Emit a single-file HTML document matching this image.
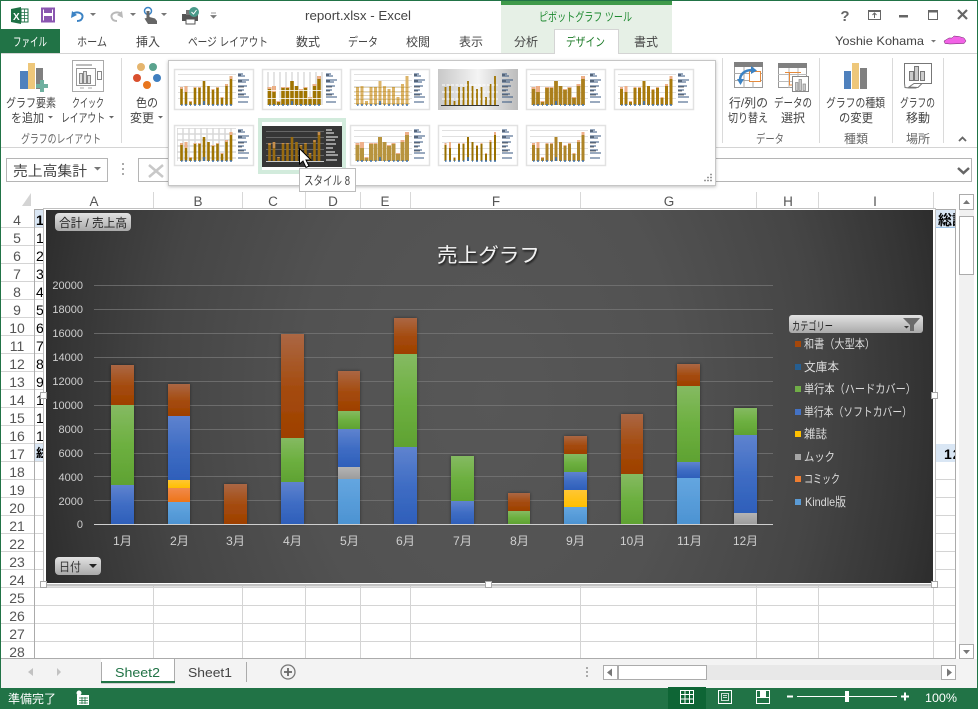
<!DOCTYPE html>
<html lang="ja"><head><meta charset="utf-8"><title>report.xlsx - Excel</title>
<style>
html,body{margin:0;padding:0;background:#fff;width:978px;height:709px;overflow:hidden}
svg{display:block}
text{font-family:"Liberation Sans","Noto Sans CJK JP",sans-serif;font-size:12px;fill:#444}
.r{font-size:14px;fill:#555;text-anchor:middle}
.c{font-size:13.5px;fill:#555;text-anchor:middle}
.y{font-size:11px;fill:#cfcfcf;text-anchor:end}
.m{font-size:12px;fill:#cfcfcf}
.l{font-size:12px;fill:#dcdcdc}
.g{fill:#666}
.k{font-size:14px;fill:#000}
</style></head><body>
<svg width="978" height="709" viewBox="0 0 978 709" xmlns="http://www.w3.org/2000/svg">
<defs>
<linearGradient id="br" x1="0" y1="0" x2="0" y2="1"><stop offset="0" stop-color="#ab6744"/><stop offset=".55" stop-color="#a44a0c"/><stop offset="1" stop-color="#9e4000"/></linearGradient>
<linearGradient id="gr" x1="0" y1="0" x2="0" y2="1"><stop offset="0" stop-color="#85ba62"/><stop offset=".5" stop-color="#6db040"/><stop offset="1" stop-color="#5fa232"/></linearGradient>
<linearGradient id="bl" x1="0" y1="0" x2="0" y2="1"><stop offset="0" stop-color="#5f83cf"/><stop offset=".5" stop-color="#3f6dc4"/><stop offset="1" stop-color="#2e5fba"/></linearGradient>
<linearGradient id="kd" x1="0" y1="0" x2="0" y2="1"><stop offset="0" stop-color="#64a6e0"/><stop offset="1" stop-color="#4c93d2"/></linearGradient>
<linearGradient id="gy" x1="0" y1="0" x2="0" y2="1"><stop offset="0" stop-color="#b4b4b4"/><stop offset="1" stop-color="#9c9c9c"/></linearGradient>
<linearGradient id="or" x1="0" y1="0" x2="0" y2="1"><stop offset="0" stop-color="#f08a4c"/><stop offset="1" stop-color="#ee7518"/></linearGradient>
<linearGradient id="ye" x1="0" y1="0" x2="0" y2="1"><stop offset="0" stop-color="#ffc634"/><stop offset="1" stop-color="#ffbf00"/></linearGradient>
<linearGradient id="btn" x1="0" y1="0" x2="0" y2="1"><stop offset="0" stop-color="#e2e2e2"/><stop offset="1" stop-color="#a9a9a9"/></linearGradient>
<linearGradient id="tg" x1="0" y1="0" x2="1" y2="0"><stop offset="0" stop-color="#c8c8c8"/><stop offset=".5" stop-color="#f4f4f4"/><stop offset="1" stop-color="#bcbcbc"/></linearGradient>
<radialGradient id="cb" gradientUnits="userSpaceOnUse" cx="490" cy="400" r="470" gradientTransform="translate(490 400) scale(1 1.4) translate(-490 -400)"><stop offset="0" stop-color="#575757"/><stop offset=".4" stop-color="#525252"/><stop offset=".7" stop-color="#454545"/><stop offset=".9" stop-color="#353535"/><stop offset="1" stop-color="#2b2b2b"/></radialGradient>
<filter id="sh" x="-30%" y="-10%" width="160%" height="120%"><feDropShadow dx="0" dy="0" stdDeviation="1.6" flood-color="#000" flood-opacity=".45"/></filter>
<filter id="ts" x="-10%" y="-20%" width="120%" height="150%"><feDropShadow dx="1" dy="1.5" stdDeviation="1" flood-color="#000" flood-opacity=".8"/></filter>
<filter id="pop" x="-3%" y="-5%" width="106%" height="112%"><feDropShadow dx="0" dy="1" stdDeviation="1.5" flood-color="#000" flood-opacity=".25"/></filter>
<clipPath id="ca"><rect x="35" y="210" width="8" height="248"/></clipPath>
<clipPath id="cz"><rect x="936" y="210" width="19" height="260"/></clipPath>
<pattern id="pt" width="6" height="6" patternUnits="userSpaceOnUse"><rect width="6" height="6" fill="#fff"/><path d="M0 3H6M3 0V6" stroke="#d8d8d8" stroke-width="1.5"/></pattern>
<g id="f"><rect x=".5" y=".5" width="79" height="40" fill="#fff" stroke="#e2e2e2" stroke-width="1.5"/></g>
<path id="gh" d="M4 5.500H62M4 11.500H62M4 17.500H62M4 23.500H62M4 29.500H62" stroke="#e0e0e0" fill="none"/>
<path id="b" fill="none" d="M7.500 36V18M12 36V17M16.500 36V32M21 36V18M25.500 36V18M30 36V12M34.500 36V17M39 36V20M43.500 36V18M48 36V28M52.500 36V15M57 36V7"/>
<path id="tc" fill="none" d="M7.500 18V20M12 17V23M16.500 32V33M21 18V19M25.500 18V19M39 20V21M43.500 18V19M48 28V29M52.500 15V17M57 7V10" stroke="#efb08a"/>
<path id="bb" fill="none" d="M7 36H8.500M11 36H13M16 36H17M20 36H22M25 36H26.500M29 35H31M34 36H35M38 36H40M43 36H44.500M47 36H49M52 36H53.500M56 36H58M30 32V36" stroke="#3b72b4" stroke-width="1.500"/>
<g id="lg" fill="none" stroke-width="1">
<path d="M64 5H69M64 7H71M64 11H75M64 13H72M64 17H73M64 21H70M64 25H72M64 28H75M64 33H74" stroke="#34557f"/>
<path d="M64 6H67M64 12H68M64 18H70M64 22H68M64 26H70" stroke="#777"/>
</g>
</defs>

<rect width="978" height="709" fill="#fff"/>

<!-- Contextual tab background -->
<rect x="501" y="0" width="171" height="53" fill="#e6f0e6"/>
<rect x="501" y="1" width="171" height="4" fill="#3f9a4a"/>
<text x="539" y="21" textLength="93" lengthAdjust="spacingAndGlyphs" style="fill:#1e8a30">ピボットグラフ ツール</text>

<!-- Title bar -->
<text x="305" y="20" textLength="106" lengthAdjust="spacingAndGlyphs" style="font-size:13px">report.xlsx - Excel</text>

<!-- QAT -->
<path d="M11 9L21 7V24L11 22Z" fill="#1e7145"/><rect x="21" y="9" width="7" height="13" fill="#fff" stroke="#1e7145"/><path d="M21 12.500H28M21 15.500H28M21 18.500H28M24.500 9V22" stroke="#1e7145" stroke-width=".8"/>
<text x="13" y="20" style="font-size:10px;font-weight:bold;fill:#fff">X</text>
<rect x="42" y="8.500" width="12" height="13" fill="#fff" stroke="#8a56b0" stroke-width="2"/><rect x="44" y="8" width="8" height="5" fill="#8a56b0"/><rect x="44" y="16" width="8" height="5" fill="#8a56b0"/>
<path d="M72 11 L71 18 L77 15Z" fill="#3c83c4"/><path d="M73 13.500C77 11 83 13 82.500 17C82 20 80 21 77 21" fill="none" stroke="#3c83c4" stroke-width="2"/>
<path d="M122 11L123 18L117 15Z" fill="#b9b9b9"/><path d="M121 13.500C117 11 111 13 111.500 17C112 20 114 21 117 21" fill="none" stroke="#b9b9b9" stroke-width="2"/>
<path d="M90 13H96L93 16Z M130 13H136L133 16Z M161 13H167L164 16Z" fill="#777"/>
<circle cx="148" cy="11" r="3.500" fill="none" stroke="#3c83c4" stroke-width="1.500"/>
<path d="M146.500 11H149.500V17L155 18.500L157 21V24H148L144.500 18.500L146.500 18Z" fill="#666"/>
<rect x="182" y="14" width="16" height="7" fill="#555"/><rect x="186" y="10" width="8" height="5" fill="#777"/><rect x="186" y="19" width="9" height="5" fill="#fff" stroke="#555"/>
<circle cx="194" cy="12" r="5" fill="#4a9a8a"/><path d="M191.500 12L193.500 14L196.500 10" fill="none" stroke="#fff"/>
<path d="M211 13H216M211 15.500H216L213.500 18Z" stroke="#777" fill="#777" stroke-width=".8"/>

<!-- Window controls -->
<text x="845" y="21" text-anchor="middle" style="font-size:15px;font-weight:bold;fill:#666">?</text>
<rect x="868.500" y="10.500" width="12" height="9" fill="none" stroke="#666" stroke-width="1"/><rect x="868" y="10" width="13" height="2" fill="#666"/><path d="M874.500 18V13M872.500 15L874.500 13L876.500 15" fill="none" stroke="#666"/>
<rect x="899" y="15" width="9" height="2.500" fill="#666"/>
<rect x="928.500" y="10.500" width="9" height="9" fill="none" stroke="#666"/><rect x="928" y="10" width="10" height="2.500" fill="#666"/>
<path d="M958 10L967 19M967 10L958 19" stroke="#666" stroke-width="2.200"/>

<!-- Tabs -->
<rect x="1" y="29" width="59" height="25" fill="#217346"/>
<text x="13" y="46" textLength="34" lengthAdjust="spacingAndGlyphs" style="fill:#fff">ファイル</text>
<text x="77" y="46" textLength="30" lengthAdjust="spacingAndGlyphs">ホーム</text>
<text x="136" y="46" textLength="24" lengthAdjust="spacingAndGlyphs">挿入</text>
<text x="188" y="46" textLength="80" lengthAdjust="spacingAndGlyphs">ページ レイアウト</text>
<text x="296" y="46" textLength="24" lengthAdjust="spacingAndGlyphs">数式</text>
<text x="348" y="46" textLength="30" lengthAdjust="spacingAndGlyphs">データ</text>
<text x="406" y="46" textLength="24" lengthAdjust="spacingAndGlyphs">校閲</text>
<text x="459" y="46" textLength="24" lengthAdjust="spacingAndGlyphs">表示</text>
<text x="514" y="46" textLength="24" lengthAdjust="spacingAndGlyphs">分析</text>
<text x="634" y="46" textLength="24" lengthAdjust="spacingAndGlyphs">書式</text>
<rect x="0" y="53" width="978" height="1" fill="#d4d4d4"/>
<path d="M554.500 54V29.500H618.500V54" fill="#fff" stroke="#d4d4d4"/><rect x="555" y="52" width="63" height="3" fill="#fff"/>
<text x="566" y="46" textLength="39" lengthAdjust="spacingAndGlyphs" style="fill:#1b7a26">デザイン</text>
<text x="835" y="45" textLength="89" lengthAdjust="spacingAndGlyphs">Yoshie Kohama</text>
<path d="M931 40H936L933.500 42.500Z" fill="#777"/>
<path d="M944 41L949 38L952 38L954 36L959 36.500L964 38L966 41L964 43.500L950 44L945 43.500Z" fill="#f262e6" stroke="#6a2a68" stroke-width=".5"/>

<!-- Ribbon left -->
<rect x="20" y="71" width="8" height="18" fill="#4f81bd"/><rect x="28" y="63" width="7" height="26" fill="#eec77a"/><rect x="36" y="68" width="7" height="21" fill="#808080"/>
<path d="M42 80V92M36 86H48" stroke="#6fb0a0" stroke-width="4"/>
<text x="6" y="107" textLength="50" lengthAdjust="spacingAndGlyphs">グラフ要素</text>
<text x="11" y="122" textLength="33" lengthAdjust="spacingAndGlyphs">を追加</text>
<path d="M48 116H53L50.500 118.500Z" fill="#666"/>
<rect x="72.500" y="60.500" width="31" height="31" fill="#fff" stroke="#aaa"/>
<rect x="76" y="64" width="16" height="2" fill="#bbb"/>
<rect x="76.500" y="68.500" width="19" height="17" fill="#fff" stroke="#999"/>
<rect x="79.500" y="73.500" width="3" height="10" fill="#ddd" stroke="#888"/><rect x="83.500" y="71.500" width="3" height="12" fill="#ddd" stroke="#888"/><rect x="87.500" y="75.500" width="3" height="8" fill="#ddd" stroke="#888"/>
<rect x="97.500" y="71.500" width="4" height="8" fill="#fff" stroke="#888"/>
<path d="M80 88H84M88 88H92" stroke="#aaa"/>
<text x="72" y="107" textLength="32" lengthAdjust="spacingAndGlyphs">クイック</text>
<text x="61" y="122" textLength="44" lengthAdjust="spacingAndGlyphs">レイアウト</text>
<path d="M109 116H114L111.500 118.500Z" fill="#666"/>
<text x="21" y="143" textLength="80" lengthAdjust="spacingAndGlyphs" class="g">グラフのレイアウト</text>
<rect x="121" y="58" width="1" height="85" fill="#dadada"/>
<circle cx="141" cy="67" r="4" fill="#e5b56e"/><circle cx="153" cy="67" r="4" fill="#5aa38e"/><circle cx="137" cy="78" r="4" fill="#d9502e"/><circle cx="157" cy="78" r="4" fill="#3f7fbf"/><circle cx="147" cy="85" r="4" fill="#e8761e"/>
<text x="136" y="107" textLength="22" lengthAdjust="spacingAndGlyphs">色の</text>
<text x="130" y="122" textLength="24" lengthAdjust="spacingAndGlyphs">変更</text>
<path d="M158 116H163L160.500 118.500Z" fill="#666"/>

<!-- Ribbon right -->
<rect x="722" y="58" width="1" height="85" fill="#dadada"/><rect x="819" y="58" width="1" height="85" fill="#dadada"/><rect x="892" y="58" width="1" height="85" fill="#dadada"/><rect x="943" y="58" width="1" height="85" fill="#dadada"/>
<rect x="734.500" y="62.500" width="28" height="25" fill="#fff" stroke="#999"/><rect x="734" y="62" width="29" height="5" fill="#808080"/>
<path d="M734 73.500H763M734 80.500H763M744 67V88M753 67V88" stroke="#aaa"/>
<rect x="749.500" y="71.500" width="11" height="10" fill="#fff" stroke="#e58a3c"/>
<path d="M740 80C740 74 745 70 752 70" fill="none" stroke="#3c83c4" stroke-width="2.500"/><path d="M751 66L757 70.500L751 74Z" fill="#3c83c4"/><path d="M737 79L744 79L740.500 85Z" fill="#3c83c4"/>
<rect x="778.500" y="63.500" width="28" height="24" fill="#fff" stroke="#999"/><rect x="778" y="63" width="29" height="5" fill="#808080"/>
<path d="M778 74.500H807M778 81.500H807M789 68V88M798 68V88" stroke="#bbb"/><path d="M785 72.500H801M789.500 72V85H792" stroke="#e58a3c" fill="none"/>
<rect x="792.500" y="76.500" width="16" height="15" fill="#fff" stroke="#888"/><rect x="795.500" y="82.500" width="2.500" height="8" fill="#ccc" stroke="#888" stroke-width=".7"/><rect x="799" y="79.500" width="2.500" height="11" fill="#ccc" stroke="#888" stroke-width=".7"/><rect x="803" y="84" width="2.500" height="6.500" fill="#ccc" stroke="#888" stroke-width=".7"/>
<text x="729" y="107" textLength="39" lengthAdjust="spacingAndGlyphs">行/列の</text>
<text x="728" y="122" textLength="40" lengthAdjust="spacingAndGlyphs">切り替え</text>
<text x="774" y="107" textLength="38" lengthAdjust="spacingAndGlyphs">データの</text>
<text x="781" y="122" textLength="24" lengthAdjust="spacingAndGlyphs">選択</text>
<text x="756" y="143" textLength="28" lengthAdjust="spacingAndGlyphs" class="g">データ</text>
<rect x="844" y="71" width="7" height="18" fill="#4f81bd"/><rect x="852" y="63" width="7" height="26" fill="#eec77a"/><rect x="860" y="68" width="7" height="21" fill="#808080"/>
<text x="826" y="107" textLength="59" lengthAdjust="spacingAndGlyphs">グラフの種類</text>
<text x="839" y="122" textLength="34" lengthAdjust="spacingAndGlyphs">の変更</text>
<text x="844" y="143" textLength="24" lengthAdjust="spacingAndGlyphs" class="g">種類</text>
<path d="M904.500 63.500H931.500V83.500H920L916 88H909L905 87.500L904.500 83.500Z" fill="#fff" stroke="#777"/>
<path d="M909 87L914 83.500H922L918 87.500Z" fill="#fff" stroke="#777"/>
<rect x="909.500" y="71.500" width="4" height="9" fill="#ccc" stroke="#777"/><rect x="914.500" y="66.500" width="4" height="14" fill="#ccc" stroke="#777"/><rect x="920.500" y="71.500" width="4" height="9" fill="#ccc" stroke="#777"/>
<text x="900" y="107" textLength="35" lengthAdjust="spacingAndGlyphs">グラフの</text>
<text x="906" y="122" textLength="24" lengthAdjust="spacingAndGlyphs">移動</text>
<text x="906" y="143" textLength="24" lengthAdjust="spacingAndGlyphs" class="g">場所</text>
<path d="M959 141L962.500 137.500L966 141" fill="none" stroke="#666" stroke-width="1.800"/>
<rect x="0" y="147" width="978" height="1" fill="#d4d4d4"/>

<!-- Formula bar -->
<rect x="6.500" y="158.500" width="101" height="23" fill="#fff" stroke="#b5b5b5"/>
<text x="13" y="176" textLength="74" lengthAdjust="spacingAndGlyphs" style="font-size:14px">売上高集計</text>
<path d="M94 167H101L97.500 170.500Z" fill="#777"/>
<path d="M123 163V165M123 168V170M123 173V175" stroke="#aaa" stroke-width="2"/>
<rect x="138.500" y="158.500" width="833" height="23" fill="#fff" stroke="#b5b5b5"/>
<path d="M149 165L163 177M163 165L149 177" stroke="#c8c8c8" stroke-width="2.500"/>
<path d="M958 168L963.500 173L969 168" fill="none" stroke="#666" stroke-width="2.500"/>

<!-- Column headers -->
<rect x="1" y="192" width="955" height="17" fill="#fff"/>
<path d="M31 193V206H22Z" fill="#d4d4d4"/>
<path d="M153.500 192V209M242.500 192V209M305.500 192V209M360.500 192V209M410.500 192V209M580.500 192V209M756.500 192V209M818.500 192V209M933.500 192V209" stroke="#d8d8d8"/>
<rect x="34" y="209" width="922" height="1" fill="#ababab"/>
<text class="c" x="94" y="206">A</text><text class="c" x="198" y="206">B</text><text class="c" x="273" y="206">C</text><text class="c" x="333" y="206">D</text><text class="c" x="385" y="206">E</text><text class="c" x="496" y="206">F</text><text class="c" x="669" y="206">G</text><text class="c" x="788" y="206">H</text><text class="c" x="875" y="206">I</text>

<!-- Grid -->
<path d="M1 227.500H43M1 245.500H43M1 263.500H43M1 281.500H43M1 299.500H43M1 317.500H43M1 335.500H43M1 353.500H43M1 371.500H43M1 389.500H43M1 407.500H43M1 425.500H43M1 443.500H43M1 461.500H43M1 479.500H43M1 497.500H43M1 515.500H43M1 533.500H43M1 551.500H43M1 569.500H43M1 587.500H955M1 605.500H955M1 623.500H955M1 641.500H955" stroke="#d4d4d4"/>
<path d="M936 479.500H955M936 497.500H955M936 515.500H955M936 533.500H955M936 551.500H955M936 569.500H955" stroke="#d4d4d4"/>
<path d="M153.500 585V658M242.500 585V658M305.500 585V658M360.500 585V658M410.500 585V658M580.500 585V658M756.500 585V658M818.500 585V658M933.500 585V658" stroke="#d4d4d4"/>
<rect x="34" y="210" width="1" height="448" fill="#ababab"/>
<rect x="955" y="209" width="1" height="449" fill="#ababab"/>
<rect x="34" y="658" width="922" height="1" fill="#ababab"/>

<!-- Row numbers -->
<text class="r" x="17" y="225">4</text><text class="r" x="17" y="243">5</text><text class="r" x="17" y="261">6</text><text class="r" x="17" y="279">7</text><text class="r" x="17" y="297">8</text><text class="r" x="17" y="315">9</text><text class="r" x="17" y="333">10</text><text class="r" x="17" y="351">11</text><text class="r" x="17" y="369">12</text><text class="r" x="17" y="387">13</text><text class="r" x="17" y="405">14</text><text class="r" x="17" y="423">15</text><text class="r" x="17" y="441">16</text><text class="r" x="17" y="459">17</text><text class="r" x="17" y="477">18</text><text class="r" x="17" y="495">19</text><text class="r" x="17" y="513">20</text><text class="r" x="17" y="531">21</text><text class="r" x="17" y="549">22</text><text class="r" x="17" y="567">23</text><text class="r" x="17" y="585">24</text><text class="r" x="17" y="603">25</text><text class="r" x="17" y="621">26</text><text class="r" x="17" y="639">27</text><text class="r" x="17" y="657">28</text>

<!-- Column A clipped content -->
<rect x="35" y="210" width="8" height="17" fill="#d9e6f4"/><rect x="35" y="444" width="8" height="17" fill="#d9e6f4"/>
<g clip-path="url(#ca)">
<text class="k" x="36" y="225" style="font-weight:bold">1</text><text class="k" x="36" y="243">1</text><text class="k" x="36" y="261">2</text><text class="k" x="36" y="279">3</text><text class="k" x="36" y="297">4</text><text class="k" x="36" y="315">5</text><text class="k" x="36" y="333">6</text><text class="k" x="36" y="351">7</text><text class="k" x="36" y="369">8</text><text class="k" x="36" y="387">9</text><text class="k" x="36" y="405">1</text><text class="k" x="36" y="423">1</text><text class="k" x="36" y="441">1</text>
<text class="k" x="36" y="459" style="font-weight:bold">総</text>
</g>

<!-- Right clipped cells -->
<rect x="936" y="210" width="19" height="17" fill="#d9e6f4"/><rect x="936" y="227" width="19" height="1" fill="#9cc3e8"/>
<rect x="936" y="444" width="19" height="18" fill="#d9e6f4"/>
<g clip-path="url(#cz)">
<text class="k" x="938" y="225" style="font-weight:bold">総計</text>
<text class="k" x="944" y="459" style="font-weight:bold;letter-spacing:1px">12</text>
</g>

<!-- Chart -->
<rect x="43.500" y="208.500" width="892" height="376" fill="#fff" stroke="#c0c0c0"/>
<rect x="43" y="585" width="893" height="1.500" fill="#c4c4c4"/>
<rect x="46" y="210" width="887" height="373" fill="url(#cb)"/>
<path d="M94 285.500H773M94 309.500H773M94 333.500H773M94 357.500H773M94 381.500H773M94 405.500H773M94 429.500H773M94 453.500H773M94 476.500H773M94 500.500H773" stroke="#7a7a7a" stroke-opacity=".7"/>
<text class="y" x="83" y="289">20000</text><text class="y" x="83" y="313">18000</text><text class="y" x="83" y="337">16000</text><text class="y" x="83" y="361">14000</text><text class="y" x="83" y="385">12000</text><text class="y" x="83" y="409">10000</text><text class="y" x="83" y="433">8000</text><text class="y" x="83" y="457">6000</text><text class="y" x="83" y="481">4000</text><text class="y" x="83" y="505">2000</text><text class="y" x="83" y="528">0</text>

<g filter="url(#sh)">
<rect x="111" y="365" width="23" height="40" fill="url(#br)"/><rect x="111" y="405" width="23" height="80" fill="url(#gr)"/><rect x="111" y="485" width="23" height="39" fill="url(#bl)"/>
<rect x="168" y="384" width="22" height="32" fill="url(#br)"/><rect x="168" y="416" width="22" height="64" fill="url(#bl)"/><rect x="168" y="480" width="22" height="8" fill="url(#ye)"/><rect x="168" y="488" width="22" height="14" fill="url(#or)"/><rect x="168" y="502" width="22" height="22" fill="url(#kd)"/>
<rect x="224" y="484" width="23" height="40" fill="url(#br)"/>
<rect x="281" y="334" width="23" height="104" fill="url(#br)"/><rect x="281" y="438" width="23" height="44" fill="url(#gr)"/><rect x="281" y="482" width="23" height="42" fill="url(#bl)"/>
<rect x="338" y="371" width="22" height="40" fill="url(#br)"/><rect x="338" y="411" width="22" height="18" fill="url(#gr)"/><rect x="338" y="429" width="22" height="38" fill="url(#bl)"/><rect x="338" y="467" width="22" height="12" fill="url(#gy)"/><rect x="338" y="479" width="22" height="45" fill="url(#kd)"/>
<rect x="394" y="318" width="23" height="36" fill="url(#br)"/><rect x="394" y="354" width="23" height="93" fill="url(#gr)"/><rect x="394" y="447" width="23" height="77" fill="url(#bl)"/>
<rect x="451" y="456" width="23" height="45" fill="url(#gr)"/><rect x="451" y="501" width="23" height="23" fill="url(#bl)"/>
<rect x="508" y="493" width="22" height="18" fill="url(#br)"/><rect x="508" y="511" width="22" height="13" fill="url(#gr)"/>
<rect x="564" y="436" width="23" height="18" fill="url(#br)"/><rect x="564" y="454" width="23" height="18" fill="url(#gr)"/><rect x="564" y="472" width="23" height="18" fill="url(#bl)"/><rect x="564" y="490" width="23" height="17" fill="url(#ye)"/><rect x="564" y="507" width="23" height="17" fill="url(#kd)"/>
<rect x="621" y="414" width="22" height="60" fill="url(#br)"/><rect x="621" y="474" width="22" height="50" fill="url(#gr)"/>
<rect x="677" y="364" width="23" height="22" fill="url(#br)"/><rect x="677" y="386" width="23" height="76" fill="url(#gr)"/><rect x="677" y="462" width="23" height="16" fill="url(#bl)"/><rect x="677" y="478" width="23" height="46" fill="url(#kd)"/>
<rect x="734" y="408" width="23" height="27" fill="url(#gr)"/><rect x="734" y="435" width="23" height="78" fill="url(#bl)"/><rect x="734" y="513" width="23" height="11" fill="url(#gy)"/>
</g>
<rect x="94" y="524" width="679" height="1" fill="#cfcfcf"/>

<text class="m" x="113" y="545" textLength="19" lengthAdjust="spacingAndGlyphs">1月</text><text class="m" x="170" y="545" textLength="19" lengthAdjust="spacingAndGlyphs">2月</text><text class="m" x="226" y="545" textLength="19" lengthAdjust="spacingAndGlyphs">3月</text><text class="m" x="283" y="545" textLength="19" lengthAdjust="spacingAndGlyphs">4月</text><text class="m" x="340" y="545" textLength="19" lengthAdjust="spacingAndGlyphs">5月</text><text class="m" x="396" y="545" textLength="19" lengthAdjust="spacingAndGlyphs">6月</text><text class="m" x="453" y="545" textLength="19" lengthAdjust="spacingAndGlyphs">7月</text><text class="m" x="510" y="545" textLength="19" lengthAdjust="spacingAndGlyphs">8月</text><text class="m" x="566" y="545" textLength="19" lengthAdjust="spacingAndGlyphs">9月</text><text class="m" x="620" y="545" textLength="25" lengthAdjust="spacingAndGlyphs">10月</text><text class="m" x="677" y="545" textLength="25" lengthAdjust="spacingAndGlyphs">11月</text><text class="m" x="733" y="545" textLength="25" lengthAdjust="spacingAndGlyphs">12月</text>

<text x="437" y="262" textLength="103" lengthAdjust="spacingAndGlyphs" filter="url(#ts)" style="font-size:20px;fill:#f2f2f2">売上グラフ</text>

<!-- Chart buttons -->
<rect x="55" y="213" width="76" height="18" rx="4" fill="url(#btn)"/>
<text x="59" y="227" textLength="68" lengthAdjust="spacingAndGlyphs" style="fill:#222;font-size:12px">合計 / 売上高</text>
<rect x="55" y="557" width="46" height="18" rx="4" fill="url(#btn)"/>
<text x="59" y="571" textLength="22" lengthAdjust="spacingAndGlyphs" style="fill:#333">日付</text>
<path d="M89 564H97L93 568Z" fill="#222"/>
<rect x="789" y="315" width="134" height="18" rx="3" fill="url(#btn)"/>
<text x="792" y="330" textLength="41" lengthAdjust="spacingAndGlyphs" style="fill:#222;font-size:11.500px">カテゴリー</text>
<path d="M903 318H920L914 325V331H910V325Z" fill="#6a6a6a"/><path d="M904 326H909L906.500 328.500Z" fill="#333"/>

<!-- Legend -->
<rect x="795" y="341" width="6" height="6" fill="#a5470a"/><rect x="795" y="364" width="6" height="6" fill="#255e91"/><rect x="795" y="386" width="6" height="6" fill="#70ad47"/><rect x="795" y="409" width="6" height="6" fill="#4472c4"/><rect x="795" y="431" width="6" height="6" fill="#ffc000"/><rect x="795" y="454" width="6" height="6" fill="#a5a5a5"/><rect x="795" y="476" width="6" height="6" fill="#ed7d31"/><rect x="795" y="499" width="6" height="6" fill="#5b9bd5"/>
<text class="l" x="804" y="348" textLength="71" lengthAdjust="spacingAndGlyphs">和書（大型本）</text>
<text class="l" x="804" y="371" textLength="35" lengthAdjust="spacingAndGlyphs">文庫本</text>
<text class="l" x="804" y="393" textLength="112" lengthAdjust="spacingAndGlyphs">単行本（ハードカバー）</text>
<text class="l" x="804" y="416" textLength="108" lengthAdjust="spacingAndGlyphs">単行本（ソフトカバー）</text>
<text class="l" x="804" y="438" textLength="23" lengthAdjust="spacingAndGlyphs">雑誌</text>
<text class="l" x="804" y="461" textLength="31" lengthAdjust="spacingAndGlyphs">ムック</text>
<text class="l" x="804" y="483" textLength="36" lengthAdjust="spacingAndGlyphs">コミック</text>
<text class="l" x="805" y="506" textLength="41" lengthAdjust="spacingAndGlyphs">Kindle版</text>

<!-- Chart handles -->
<g fill="#fff" stroke="#a8a8a8">
<rect x="40.500" y="392.500" width="6" height="6"/><rect x="931.500" y="392.500" width="6" height="6"/>
<rect x="40.500" y="581.500" width="6" height="6"/><rect x="485.500" y="581.500" width="6" height="6"/><rect x="931.500" y="581.500" width="6" height="6"/>
</g>

<!-- Gallery popup -->
<rect x="168.500" y="60.500" width="547" height="125" fill="#fff" stroke="#c6c6c6" filter="url(#pop)"/>
<rect x="258" y="118" width="88" height="56" fill="#d2ebdc"/><rect x="262" y="122" width="80" height="48" fill="#fff"/>

<!-- Thumbs row 1 -->
<g transform="translate(174,69)"><use href="#f"/><use href="#gh"/><use href="#b" stroke="#a07400" stroke-width="2.600"/><use href="#tc" stroke-width="2.600"/><use href="#bb"/><use href="#lg"/></g>
<g transform="translate(262,69)"><use href="#f"/><path d="M6 3V36M12 3V36M18 3V36M24 3V36M30 3V36M36 3V36M42 3V36M48 3V36M54 3V36M60 3V36" stroke="#dcdcdc" stroke-width="1.500"/><use href="#b" stroke="#a07400" stroke-width="3.600"/><use href="#tc" stroke-width="3.600"/><path d="M4 21.500H60M4 29.500H60" stroke="#fff" stroke-opacity=".8"/><use href="#bb"/><use href="#lg"/></g>
<g transform="translate(350,69)"><use href="#f"/><use href="#gh"/><use href="#b" stroke="#dcb469" stroke-width="3"/><path d="M4 18.500H60M4 22.500H60M4 26.500H60M4 30.500H60M4 34.500H60" stroke="#a07400" stroke-opacity=".3"/><use href="#bb"/><use href="#lg"/></g>
<g transform="translate(438,69)"><rect width="80" height="41" fill="url(#tg)"/><use href="#b" stroke="#a07400" stroke-width="1.800"/><path d="M4 16H60M4 23H60M4 30H60" stroke="#fff" stroke-dasharray="3 1.500"/><rect x="3" y="36" width="58" height="1" fill="#333"/><use href="#lg"/></g>
<g transform="translate(526,69)"><use href="#f"/><use href="#gh"/><use href="#b" stroke="#ab7f1c" stroke-width="3.800"/><use href="#tc" stroke-width="3.800"/><use href="#bb"/><use href="#lg"/></g>
<g transform="translate(614,69)"><use href="#f"/><use href="#gh"/><use href="#b" stroke="#a87a0c" stroke-width="3"/><use href="#tc" stroke-width="3"/><use href="#bb"/><use href="#lg"/></g>
<!-- Thumbs row 2 -->
<g transform="translate(174,125)"><use href="#f"/><rect x="3" y="3" width="59" height="33" fill="url(#pt)"/><use href="#b" stroke="#a07400" stroke-width="2.600"/><use href="#tc" stroke-width="2.600"/><use href="#bb"/><use href="#lg"/></g>
<g transform="translate(262,125)"><rect x="0" y="1" width="80" height="41" fill="#363636"/><path d="M4 6.500H62M4 12.500H62M4 18.500H62M4 24.500H62M4 30.500H62" stroke="#666"/><use href="#b" stroke="#9a6c10" stroke-width="2.600"/><use href="#tc" stroke-width="2.600" opacity=".5"/><rect x="4" y="36" width="58" height="1" fill="#ccc"/><path d="M64 5H70M64 8H72M64 12H76M64 15H73M64 19H74M64 23H71M64 27H73M64 30H76M64 35H75" stroke="#fff" fill="none"/></g>
<g transform="translate(350,125)"><use href="#f"/><use href="#gh"/><use href="#b" stroke="#b8943e" stroke-width="4"/><use href="#tc" stroke-width="4"/><use href="#bb"/><use href="#lg"/></g>
<g transform="translate(438,125)"><use href="#f"/><use href="#gh"/><use href="#b" stroke="#9a7000" stroke-width="2"/><use href="#tc" stroke-width="2"/><use href="#bb"/><use href="#lg"/></g>
<g transform="translate(526,125)"><use href="#f"/><use href="#gh"/><use href="#b" stroke="#ae8428" stroke-width="3"/><use href="#tc" stroke-width="3"/><use href="#bb"/><use href="#lg"/></g>
<path d="M712 175.500h2M709 178.500h2M712 178.500h2M706 181.500h2M709 181.500h2M712 181.500h2" stroke="#999" stroke-width="1.500" transform="translate(-2,-1)"/>

<!-- Tooltip -->
<rect x="299.500" y="168.500" width="56" height="23" fill="#fff" stroke="#bdbdbd"/>
<text x="304" y="185" textLength="46" lengthAdjust="spacingAndGlyphs" style="font-size:12.500px">スタイル 8</text>
<path d="M299.500 148.500V164L303 161L306 167.500L309 166L306 160H311Z" fill="#fff" stroke="#000"/>

<!-- Scrollbar vertical -->
<rect x="956" y="192" width="21" height="467" fill="#fff"/>
<rect x="959" y="194" width="15" height="465" fill="#f1f1f1"/>
<rect x="959.500" y="194.500" width="14" height="15" fill="#fff" stroke="#ababab"/><path d="M963 204H970L966.500 200Z" fill="#777"/>
<rect x="959.500" y="216.500" width="14" height="58" fill="#fff" stroke="#ababab"/>
<rect x="959.500" y="644.500" width="14" height="14" fill="#fff" stroke="#ababab"/><path d="M963 650H970L966.500 654Z" fill="#777"/>

<!-- Sheet bar -->
<rect x="1" y="659" width="976" height="29" fill="#f3f3f3"/>
<rect x="1" y="658" width="100" height="1" fill="#ababab"/><rect x="174" y="658" width="782" height="1" fill="#ababab"/>
<path d="M28 672L33 668V676Z M61 672L57 668V676Z" fill="#c2c2c2"/>
<path d="M101.500 659V683H174.500V659" fill="#fff" stroke="#ababab"/>
<rect x="101" y="659" width="73" height="3" fill="#fff"/><rect x="101" y="681" width="74" height="2" fill="#217346"/>
<text x="115" y="677" textLength="45" lengthAdjust="spacingAndGlyphs" style="font-size:13px;fill:#217346">Sheet2</text>
<text x="188" y="677" textLength="44" lengthAdjust="spacingAndGlyphs" style="font-size:13px">Sheet1</text>
<rect x="246" y="662" width="1" height="20" fill="#ababab"/>
<circle cx="288" cy="672" r="7" fill="none" stroke="#777" stroke-width="1.300"/><path d="M284 672H292M288 668V676" stroke="#666" stroke-width="1.800"/>
<path d="M587 667V669M587 671V673M587 675V677" stroke="#aaa" stroke-width="2"/>
<rect x="603" y="665" width="353" height="15" fill="#e8e8e8"/>
<rect x="603.500" y="665.500" width="14" height="14" fill="#fff" stroke="#ababab"/><path d="M607 672.500L612 668.500V676.500Z" fill="#777"/>
<rect x="618.500" y="665.500" width="88" height="14" fill="#fff" stroke="#ababab"/>
<rect x="941.500" y="665.500" width="14" height="14" fill="#fff" stroke="#ababab"/><path d="M952 672.500L947 668.500V676.500Z" fill="#777"/>

<!-- Status bar -->
<rect x="0" y="688" width="978" height="21" fill="#217346"/>
<text x="8" y="703" textLength="48" lengthAdjust="spacingAndGlyphs" style="fill:#fff">準備完了</text>
<rect x="77" y="695" width="12" height="10" fill="#fff"/><circle cx="79" cy="693" r="2.500" fill="#fff"/><path d="M79 698H88M79 700.500H88M79 703H88M82 697V704M85 697V704" stroke="#217346" stroke-width=".8"/>
<rect x="668" y="687" width="38" height="22" fill="#0e6535"/>
<path d="M680.500 690.500H693.500V703.500H680.500ZM680.500 694.500H693.500M680.500 699H693.500M685 690.500V703.500M689.500 690.500V703.500" fill="none" stroke="#fff"/>
<rect x="718.500" y="690.500" width="13" height="13" fill="none" stroke="#fff"/><path d="M721.500 693.500H728.500V700.500H721.500ZM723 695.500H727M723 697.500H727" fill="none" stroke="#fff" stroke-width=".8"/>
<rect x="756.500" y="690.500" width="13" height="13" fill="none" stroke="#fff"/><rect x="760" y="690" width="6" height="7" fill="#fff"/><rect x="757" y="697" width="12" height="1" fill="#fff"/>
<rect x="787" y="695.500" width="6" height="2" fill="#fff"/>
<rect x="797" y="696" width="100" height="1" fill="#fff"/>
<rect x="845" y="691" width="4" height="11" fill="#fff"/>
<path d="M901 696.500H909M905 692.500V700.500" stroke="#fff" stroke-width="2"/>
<text x="925" y="702" textLength="32" lengthAdjust="spacingAndGlyphs" style="fill:#fff">100%</text>

<!-- Window border -->
<rect x="0" y="0" width="978" height="1" fill="#217346"/>
<rect x="0" y="0" width="1" height="709" fill="#217346"/>
<rect x="977" y="0" width="1" height="709" fill="#217346"/>
</svg>
</body></html>
